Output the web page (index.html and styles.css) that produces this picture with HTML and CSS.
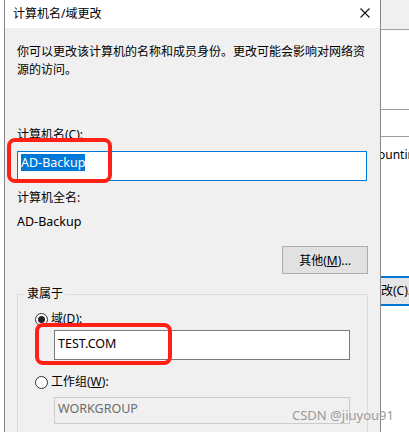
FILE: index.html
```html
<!DOCTYPE html>
<html lang="zh-CN">
<head>
  <meta charset="UTF-8" />
  <title>计算机名/域更改</title>
  <link rel="stylesheet" href="styles.css">
</head>
<body>

  <div class="screen">
    <div class="gutter"></div>

    <div class="dialog">
      <div class="titlebar">
        <span class="title">计算机名/域更改</span>
        <svg class="close" width="10" height="10" viewBox="0 0 10 10">
          <path d="M0.5 0.5 L9.5 9.5 M9.5 0.5 L0.5 9.5" stroke="#111" stroke-width="1.1" fill="none"/>
        </svg>
      </div>

      <div class="content">
        <p class="intro">你可以更改该计算机的名称和成员身份。更改可能会影响对网络资<br>源的访问。</p>

        <div class="field-label label-name">计算机名(<u>C</u>):</div>
        <div class="textbox focused"><span class="selected">AD-Backup</span></div>

        <div class="field-label label-full">计算机全名:</div>
        <div class="value">AD-Backup</div>

        <div class="button-row">
          <button class="btn">其他(<u>M</u>)...</button>
        </div>

        <div class="group">
          <span class="group-title">隶属于</span>
          <div class="radio-row"><span class="radio checked"></span>域(<u>D</u>):</div>
          <div class="textbox member">TEST.COM</div>
          <div class="radio-row second"><span class="radio"></span>工作组(<u>W</u>):</div>
          <div class="textbox member disabled">WORKGROUP</div>
        </div>
      </div>
    </div>

    <div class="backdrop">
      <div class="bd-head"></div>
      <div class="bd-gap"></div>
      <div class="bd-row"></div>
      <div class="bd-text">ountin</div>
      <div class="bd-button">改(C)...</div>
    </div>

    <div class="mark mark-name"></div>
    <div class="mark mark-domain"></div>
    <div class="watermark">CSDN @jiuyou91</div>
  </div>

</body>
</html>
```

FILE: styles.css
```css
body {
  margin: 0;
  font-family: "Segoe UI", "Noto Sans", "Noto Sans CJK SC", sans-serif;
  font-size: 12px;
  color: #000;
  background: #fff;
}

.screen {
  position: relative;
  display: flex;
  width: 409px;
  height: 432px;
  overflow: hidden;
}

.gutter {
  width: 4px;
  flex: none;
  background: #fff;
}

.dialog {
  width: 375px;
  flex: none;
  border-left: 1px solid #888;
  border-right: 1px solid #888;
  background: #f0f0f0;
}

.titlebar {
  height: 28px;
  background: #fff;
  display: flex;
  align-items: center;
  justify-content: space-between;
  padding: 0 10px 0 8px;
}

.title {
  line-height: 18px;
}

.close {
  margin-top: -2px;
}

.content {
  padding: 0 12px 0 12px;
}

.intro {
  margin: 15px 0 0;
  line-height: 18px;
}

.field-label,
.value {
  line-height: 18px;
}

.label-name {
  margin-top: 47px;
}

.label-full {
  margin-top: 8px;
}

.value {
  margin-top: 6px;
  font-size: 12.5px;
}

.textbox {
  box-sizing: border-box;
  height: 30px;
  padding: 3px 3px 0;
  font-size: 12.5px;
  line-height: 16px;
  background: #fff;
  border: 1px solid #7a7a7a;
}

.textbox.focused {
  margin: 7px 1px 0 0;
  border-color: #0078d7;
}

.selected {
  background: #0078d7;
  color: #fff;
}

.button-row {
  display: flex;
  justify-content: flex-end;
  margin-top: 15px;
}

.btn {
  box-sizing: border-box;
  width: 86px;
  height: 28px;
  padding: 0;
  font: inherit;
  color: #000;
  background: #e1e1e1;
  border: 1px solid #adadad;
}

.group {
  position: relative;
  margin-top: 20px;
  height: 200px;
  padding: 15px 17px 0;
  border: 1px solid #dcdcdc;
}

.group-title {
  position: absolute;
  top: -10px;
  left: 7px;
  padding: 0 2px;
  line-height: 18px;
  background: #f0f0f0;
}

.radio-row {
  display: flex;
  align-items: center;
  line-height: 18px;
}

.radio-row.second {
  margin-top: 13px;
}

.radio {
  box-sizing: border-box;
  width: 13px;
  height: 13px;
  margin-right: 3px;
  border: 1px solid #333;
  border-radius: 50%;
  background: #fff;
  display: flex;
  align-items: center;
  justify-content: center;
}

.radio.checked::after {
  content: "";
  width: 7px;
  height: 7px;
  border-radius: 50%;
  background: #222;
}

.textbox.member {
  margin: 2px 0 0 19px;
  padding-top: 5px;
}

.textbox.disabled {
  height: 27px;
  margin-top: 6px;
  padding-top: 3px;
  color: #6d6d6d;
  background: #f0f0f0;
  border-color: #cccccc;
}

.backdrop {
  flex: 1;
  overflow: hidden;
  white-space: nowrap;
  background: #fff;
}

.bd-head {
  height: 29px;
  background: #f0f0f0;
  border-bottom: 1px solid #a0a0a0;
}

.bd-gap {
  height: 79px;
  border-bottom: 1px solid #a0a0a0;
}

.bd-row {
  height: 26px;
  border-bottom: 1px solid #a0a0a0;
}

.bd-text {
  margin: 9px 0 0 -3px;
  line-height: 18px;
}

.bd-button {
  box-sizing: border-box;
  height: 30px;
  margin-top: 112px;
  padding-top: 4px;
  line-height: 18px;
  background: #e5e5e5;
  border-top: 2px solid #0078d7;
  border-bottom: 2px solid #0078d7;
}

.mark {
  position: absolute;
  box-sizing: border-box;
  border: 4px solid #ff2116;
  border-radius: 8px;
}

.mark-name {
  left: 7px;
  top: 138px;
  width: 105px;
  height: 45px;
}

.mark-domain {
  left: 35px;
  top: 323px;
  width: 137px;
  height: 42px;
}

.watermark {
  position: absolute;
  left: 292px;
  top: 405px;
  font-size: 13px;
  line-height: 20px;
  color: #9a9a9a;
}
```
